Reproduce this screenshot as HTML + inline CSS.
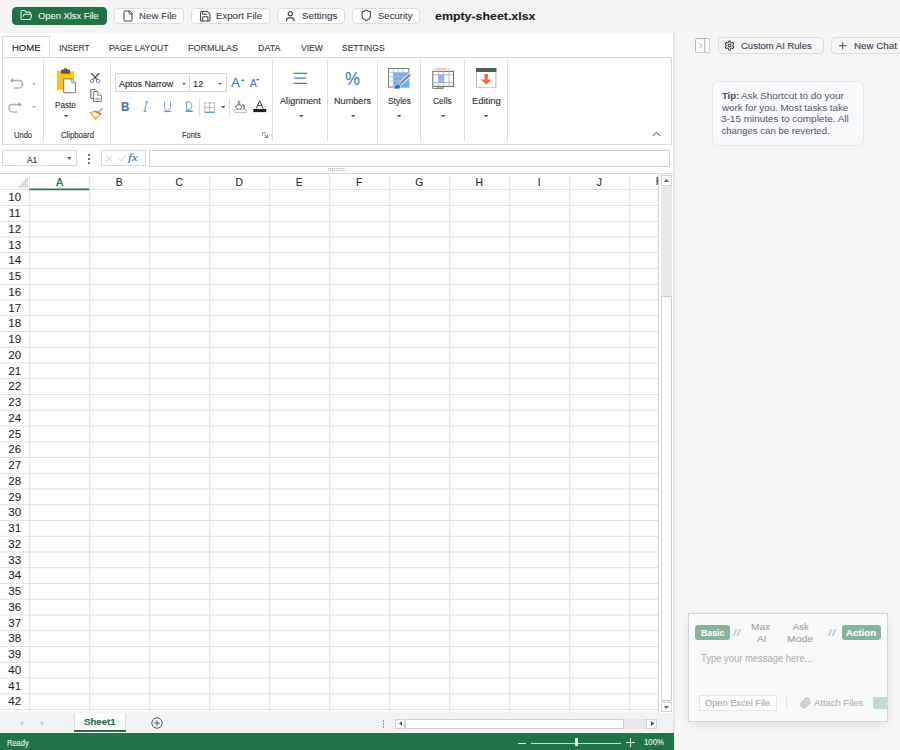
<!DOCTYPE html>
<html><head><meta charset="utf-8">
<style>
*{box-sizing:border-box;margin:0;padding:0}
html,body{width:900px;height:750px;overflow:hidden;background:#f4f4f4;font-family:"Liberation Sans",sans-serif}
.a{position:absolute}
.t{position:absolute;white-space:pre;transform-origin:0 0;-webkit-text-stroke:0.12px currentColor}
</style></head><body>
<div class="a" style="left:0px;top:0px;width:900px;height:32.6px;background:#f4f4f4"></div>
<div class="a" style="left:12px;top:7px;width:94.8px;height:17.5px;background:#217346;border:1px solid #217346;border-radius:4px"></div>
<div class="a" style="left:113.6px;top:7.6px;width:70.4px;height:16.6px;background:#fff;border:1px solid #dedede;border-radius:4px"></div>
<div class="a" style="left:191px;top:7.6px;width:79.30000000000001px;height:16.6px;background:#fff;border:1px solid #dedede;border-radius:4px"></div>
<div class="a" style="left:276.7px;top:7.6px;width:68.60000000000002px;height:16.6px;background:#fff;border:1px solid #dedede;border-radius:4px"></div>
<div class="a" style="left:352.3px;top:7.6px;width:68.0px;height:16.6px;background:#fff;border:1px solid #dedede;border-radius:4px"></div>
<svg class="a" style="left:20.2px;top:9.4px" width="12.6" height="12.6" viewBox="0 0 24 24" fill="none" stroke-linecap="round" stroke-linejoin="round" stroke="#dff5e6" stroke-width="2"><path d="m6 14 1.5-2.9A2 2 0 0 1 9.24 10H20a2 2 0 0 1 1.94 2.5l-1.54 6a2 2 0 0 1-1.95 1.5H4a2 2 0 0 1-2-2V5a2 2 0 0 1 2-2h3.9a2 2 0 0 1 1.69.9l.81 1.2a2 2 0 0 0 1.67.9H18a2 2 0 0 1 2 2v2"/></svg>
<svg class="a" style="left:121.6px;top:10.1px" width="12" height="12" viewBox="0 0 24 24" fill="none" stroke-linecap="round" stroke-linejoin="round" stroke="#3b4250" stroke-width="2"><path d="M15 2H6a2 2 0 0 0-2 2v16a2 2 0 0 0 2 2h12a2 2 0 0 0 2-2V7Z"/><path d="M14 2v4a2 2 0 0 0 2 2h4"/></svg>
<svg class="a" style="left:199px;top:9.6px" width="12.6" height="12.6" viewBox="0 0 24 24" fill="none" stroke-linecap="round" stroke-linejoin="round" stroke="#3b4250" stroke-width="2"><path d="M15.2 3a2 2 0 0 1 1.4.6l3.8 3.8a2 2 0 0 1 .6 1.4V19a2 2 0 0 1-2 2H5a2 2 0 0 1-2-2V5a2 2 0 0 1 2-2z"/><path d="M17 21v-7a1 1 0 0 0-1-1H8a1 1 0 0 0-1 1v7"/><path d="M7 3v4a1 1 0 0 0 1 1h7"/></svg>
<svg class="a" style="left:284.3px;top:9.7px" width="12.6" height="12.6" viewBox="0 0 24 24" fill="none" stroke-linecap="round" stroke-linejoin="round" stroke="#3b4250" stroke-width="2"><path d="M19 21v-2a4 4 0 0 0-4-4H9a4 4 0 0 0-4 4v2"/><circle cx="12" cy="7" r="4"/></svg>
<svg class="a" style="left:359.6px;top:9.3px" width="12.6" height="12.6" viewBox="0 0 24 24" fill="none" stroke-linecap="round" stroke-linejoin="round" stroke="#3b4250" stroke-width="2"><path d="M20 13c0 5-3.5 7.5-7.66 8.95a1 1 0 0 1-.67-.01C7.5 20.5 4 18 4 13V6a1 1 0 0 1 1-1c2 0 4.5-1.2 6.24-2.72a1.17 1.17 0 0 1 1.52 0C14.51 3.81 17 5 19 5a1 1 0 0 1 1 1z"/></svg>
<div class="t" style="left:38.21px;top:11.00px;font-size:9.6px;line-height:9.6px;color:#eaf7ee;font-weight:400;transform:scaleX(0.9740);">Open Xlsx File</div>
<div class="t" style="left:138.64px;top:11.00px;font-size:9.6px;line-height:9.6px;color:#3b4250;font-weight:400;transform:scaleX(1.0097);">New File</div>
<div class="t" style="left:216.15px;top:11.00px;font-size:9.6px;line-height:9.6px;color:#3b4250;font-weight:400;transform:scaleX(1.0056);">Export File</div>
<div class="t" style="left:302.19px;top:11.00px;font-size:9.6px;line-height:9.6px;color:#3b4250;font-weight:400;transform:scaleX(1.0176);">Settings</div>
<div class="t" style="left:377.80px;top:11.00px;font-size:9.6px;line-height:9.6px;color:#3b4250;font-weight:400;transform:scaleX(0.9927);">Security</div>
<div class="t" style="left:434.57px;top:10.00px;font-size:11.6px;line-height:11.6px;color:#1b1b1b;font-weight:700;transform:scaleX(1.0674);">empty-sheet.xlsx</div>
<div class="a" style="left:0px;top:32.6px;width:673.3px;height:112.4px;background:#fff"></div>
<div class="a" style="left:2.4px;top:56.6px;width:669.4px;height:88.2px;border:1px solid #dadada"></div>
<div class="a" style="left:2.4px;top:35.6px;width:47.6px;height:21.6px;border:1px solid #d6d6d6;border-bottom:none;background:#fff"></div>
<div class="t" style="left:11.58px;top:43.00px;font-size:9.9px;line-height:9.9px;color:#222;font-weight:400;transform:scaleX(0.9614);">HOME</div>
<div class="t" style="left:58.85px;top:43.00px;font-size:9.9px;line-height:9.9px;color:#3a3a3a;font-weight:400;transform:scaleX(0.8460);">INSERT</div>
<div class="t" style="left:109.35px;top:43.00px;font-size:9.9px;line-height:9.9px;color:#3a3a3a;font-weight:400;transform:scaleX(0.8729);">PAGE LAYOUT</div>
<div class="t" style="left:188.42px;top:43.00px;font-size:9.9px;line-height:9.9px;color:#3a3a3a;font-weight:400;transform:scaleX(0.9098);">FORMULAS</div>
<div class="t" style="left:257.72px;top:43.00px;font-size:9.9px;line-height:9.9px;color:#3a3a3a;font-weight:400;transform:scaleX(0.9072);">DATA</div>
<div class="t" style="left:300.60px;top:43.00px;font-size:9.9px;line-height:9.9px;color:#3a3a3a;font-weight:400;transform:scaleX(0.8634);">VIEW</div>
<div class="t" style="left:342.17px;top:43.00px;font-size:9.9px;line-height:9.9px;color:#3a3a3a;font-weight:400;transform:scaleX(0.8619);">SETTINGS</div>
<div class="a" style="left:42.5px;top:59.7px;width:1px;height:82px;background:#dedede"></div>
<div class="a" style="left:109.9px;top:59.7px;width:1px;height:82px;background:#dedede"></div>
<div class="a" style="left:271.9px;top:59.7px;width:1px;height:82px;background:#dedede"></div>
<div class="a" style="left:327.0px;top:59.7px;width:1px;height:82px;background:#dedede"></div>
<div class="a" style="left:376.9px;top:59.7px;width:1px;height:82px;background:#dedede"></div>
<div class="a" style="left:419.8px;top:59.7px;width:1px;height:82px;background:#dedede"></div>
<div class="a" style="left:463.7px;top:59.7px;width:1px;height:82px;background:#dedede"></div>
<div class="a" style="left:507.0px;top:59.7px;width:1px;height:82px;background:#dedede"></div>
<div class="t" style="left:14.24px;top:131.00px;font-size:8.3px;line-height:8.3px;color:#333;font-weight:400;transform:scaleX(0.9105);">Undo</div>
<div class="t" style="left:60.64px;top:131.00px;font-size:8.3px;line-height:8.3px;color:#333;font-weight:400;transform:scaleX(0.9275);">Clipboard</div>
<div class="t" style="left:182.43px;top:131.00px;font-size:8.3px;line-height:8.3px;color:#333;font-weight:400;transform:scaleX(0.8962);">Fonts</div>
<div class="t" style="left:54.50px;top:101.00px;font-size:8.8px;line-height:8.8px;color:#333;font-weight:400;transform:scaleX(0.9302);">Paste</div>
<div class="t" style="left:279.80px;top:97.00px;font-size:8.9px;line-height:8.9px;color:#333;font-weight:400;transform:scaleX(1.0329);">Alignment</div>
<div class="t" style="left:334.23px;top:97.00px;font-size:8.9px;line-height:8.9px;color:#333;font-weight:400;transform:scaleX(1.0286);">Numbers</div>
<div class="t" style="left:387.53px;top:97.00px;font-size:8.9px;line-height:8.9px;color:#333;font-weight:400;transform:scaleX(0.9489);">Styles</div>
<div class="t" style="left:433.22px;top:97.00px;font-size:8.9px;line-height:8.9px;color:#333;font-weight:400;transform:scaleX(0.9526);">Cells</div>
<div class="t" style="left:472.00px;top:97.00px;font-size:8.9px;line-height:8.9px;color:#333;font-weight:400;transform:scaleX(1.0602);">Editing</div>
<svg class="a" style="left:63.7px;top:115.0px" width="4.4" height="2.4"><path d="M0 0L4.4 0L2.2 2.4Z" fill="#555"/></svg>
<svg class="a" style="left:298.6px;top:115.0px" width="4.4" height="2.4"><path d="M0 0L4.4 0L2.2 2.4Z" fill="#555"/></svg>
<svg class="a" style="left:350.6px;top:115.0px" width="4.4" height="2.4"><path d="M0 0L4.4 0L2.2 2.4Z" fill="#555"/></svg>
<svg class="a" style="left:397.2px;top:115.0px" width="4.4" height="2.4"><path d="M0 0L4.4 0L2.2 2.4Z" fill="#555"/></svg>
<svg class="a" style="left:440.6px;top:115.0px" width="4.4" height="2.4"><path d="M0 0L4.4 0L2.2 2.4Z" fill="#555"/></svg>
<svg class="a" style="left:484.2px;top:115.0px" width="4.4" height="2.4"><path d="M0 0L4.4 0L2.2 2.4Z" fill="#555"/></svg>
<svg class="a" style="left:8px;top:76px" width="16" height="14" viewBox="0 0 16 14" ><path d="M4.6 4.5 H11 A3.7 3.7 0 0 1 11 11.9 H6.2" fill="none" stroke="#b0b0b0" stroke-width="1.5"/><path d="M1.8 4.5 L5.2 1.9 L5.2 7.1 Z" fill="#aaa"/></svg>
<svg class="a" style="left:8px;top:99.8px" width="16" height="14" viewBox="0 0 16 14" ><path d="M11.1 4.5 H4.7 A3.7 3.7 0 0 0 4.7 11.9 H9.5" fill="none" stroke="#b0b0b0" stroke-width="1.5"/><path d="M13.9 4.5 L10.5 1.9 L10.5 7.1 Z" fill="#aaa"/></svg>
<svg class="a" style="left:31.5px;top:82.80000000000001px" width="4" height="2.2"><path d="M0 0L4 0L2.0 2.2Z" fill="#b0b0b0"/></svg>
<svg class="a" style="left:31.5px;top:105.5px" width="4" height="2.2"><path d="M0 0L4 0L2.0 2.2Z" fill="#b0b0b0"/></svg>
<svg class="a" style="left:56px;top:68px" width="22" height="27" viewBox="0 0 22 27" ><rect x="1" y="3.2" width="17" height="19.2" fill="#fcc419"/><rect x="5" y="1.4" width="9" height="4.4" rx="1" fill="#555"/><rect x="8" y="0.4" width="3" height="2" fill="#555"/><path d="M7.7 10.9 H15.7 L19.6 14.8 V24.7 H7.7 Z" fill="#fff" stroke="#777" stroke-width="1"/><path d="M15.7 10.9 V14.8 H19.6" fill="#ddd" stroke="#888" stroke-width="0.8"/></svg>
<svg class="a" style="left:89px;top:72px" width="14" height="13" viewBox="0 0 14 13" ><path d="M2.2 1.2 L8.1 7.4 M10.2 1.2 L4.3 7.4" stroke="#4a4a4a" stroke-width="1.25" fill="none"/><circle cx="3.1" cy="9.1" r="1.8" fill="none" stroke="#4a7fc0" stroke-width="0.95"/><circle cx="9.2" cy="9.1" r="1.8" fill="none" stroke="#4a7fc0" stroke-width="0.95"/></svg>
<svg class="a" style="left:89.5px;top:89px" width="13" height="13.5" viewBox="0 0 13 13.5" ><path d="M0.8 0.6 H5 L7 2.6 V9.6 H0.8 Z" fill="#fff" stroke="#555" stroke-width="0.9"/><path d="M3.6 2.6 H7.6 L11.3 6.4 V12.4 H3.6 Z" fill="#fff" stroke="#666" stroke-width="0.9"/><path d="M7.6 2.6 V6.4 H11.3" fill="#e8e8e8" stroke="#888" stroke-width="0.7"/><path d="M5.2 9.3 H9.6 M5.2 10.7 H9.6" stroke="#6a8fb8" stroke-width="0.7"/></svg>
<svg class="a" style="left:89px;top:106px" width="15" height="15" viewBox="0 0 15 15" ><path d="M1.3 6.6 L6.1 5.2 L11.9 8.1 L6.6 13.4 Z" fill="#fff3dc" stroke="#f0a030" stroke-width="1.1" stroke-linejoin="round"/><path d="M4 10.5 L6.6 13.4 L9 11 Z" fill="#f5b840"/><path d="M6.1 5.2 L11.9 8.1" stroke="#8a8a8a" stroke-width="1.8"/><path d="M9 6.6 L13.8 2.3" stroke="#999" stroke-width="2.2" stroke-dasharray="1 0.6"/></svg>
<div class="a" style="left:115.1px;top:73.3px;width:111.8px;height:19.1px;border:1px solid #d9d9d9"></div>
<div class="a" style="left:189.4px;top:73.3px;width:1px;height:19.1px;background:#d9d9d9"></div>
<div class="t" style="left:118.90px;top:80.00px;font-size:8.9px;line-height:8.9px;color:#2b2b2b;font-weight:400;transform:scaleX(1.0102);">Aptos Narrow</div>
<div class="t" style="left:193.02px;top:80.00px;font-size:8.9px;line-height:8.9px;color:#2b2b2b;font-weight:400;transform:scaleX(1.0400);">12</div>
<svg class="a" style="left:181.8px;top:82.7px" width="4" height="2"><path d="M0 0L4 0L2.0 2Z" fill="#666"/></svg>
<svg class="a" style="left:218.3px;top:82.7px" width="4" height="2"><path d="M0 0L4 0L2.0 2Z" fill="#666"/></svg>
<div class="t" style="left:231.30px;top:77.00px;font-size:12.2px;line-height:12.2px;color:#3c7bc0;font-weight:400;transform:scaleX(1.0875);">A</div>
<svg class="a" style="left:241.2px;top:78.5px" width="3.6" height="2"><path d="M0 2L1.8 0L3.6 2Z" fill="#3c7bc0"/></svg>
<div class="t" style="left:250.00px;top:79.00px;font-size:10.3px;line-height:10.3px;color:#3c7bc0;font-weight:400;transform:scaleX(0.9926);">A</div>
<svg class="a" style="left:255.5px;top:79.25px" width="3.4" height="1.9"><path d="M0 0L3.4 0L1.7 1.9Z" fill="#3c7bc0"/></svg>
<div class="t" style="left:121.31px;top:101.00px;font-size:12.6px;line-height:12.6px;color:#3b78bd;font-weight:700;transform:scaleX(0.9161);">B</div>
<svg class="a" style="left:143px;top:100.5px" width="7" height="11" viewBox="0 0 7 11" ><path d="M3.6 0.8 L1.6 10.3 M2.4 0.8 H5.6 M0.6 10.3 H3.6" stroke="#4a86c5" stroke-width="0.9" fill="none"/></svg>
<svg class="a" style="left:163px;top:100.5px" width="9" height="12" viewBox="0 0 9 12" ><path d="M1.5 0.8 V6.5 A3 3 0 0 0 7.5 6.5 V0.8" stroke="#6a9bd0" stroke-width="0.9" fill="none"/><path d="M0.8 10.6 H8.2" stroke="#4a86c5" stroke-width="0.9"/></svg>
<svg class="a" style="left:184.5px;top:100.5px" width="9" height="12" viewBox="0 0 9 12" ><path d="M1.5 0.8 H3.8 A4 4 0 0 1 3.8 8.6 H1.5 Z" stroke="#6a9bd0" stroke-width="0.9" fill="none"/><rect x="0.6" y="9.2" width="7" height="1.8" fill="#5e9be0"/></svg>
<div class="a" style="left:198.7px;top:97.6px;width:1px;height:19px;background:#dedede"></div>
<div class="a" style="left:229.1px;top:97.6px;width:1px;height:19px;background:#dedede"></div>
<svg class="a" style="left:204px;top:101.5px" width="12" height="11" viewBox="0 0 12 11" ><path d="M0.8 0.8 H10.5 V10 M0.8 0.8 V10 M5.6 0.8 V10 M0.8 5.4 H10.5" stroke="#8f8f8f" stroke-width="0.8" stroke-dasharray="1.6 0.7" fill="none"/><path d="M0.5 10.2 H10.8" stroke="#3c7bc0" stroke-width="1.1"/></svg>
<svg class="a" style="left:221.10000000000002px;top:106.3px" width="4.4" height="2.4"><path d="M0 0L4.4 0L2.2 2.4Z" fill="#555"/></svg>
<svg class="a" style="left:233.5px;top:99.6px" width="13" height="13.5" viewBox="0 0 13 13.5" ><path d="M1.4 7 L4.6 3.6 L8.2 6.6 L5 10 Z" fill="#fff" stroke="#444" stroke-width="0.9" stroke-linejoin="round"/><circle cx="4.9" cy="2" r="1.1" fill="none" stroke="#777" stroke-width="0.8"/><path d="M4.9 3.1 V6.2" stroke="#666" stroke-width="0.7"/><path d="M8.4 5 Q10.6 4.6 10 9.2" stroke="#3c7bc0" stroke-width="1.4" fill="none"/><rect x="0.9" y="9.7" width="11.4" height="3" fill="#fff" stroke="#aaa" stroke-width="0.8"/></svg>
<svg class="a" style="left:253px;top:100.2px" width="13.5" height="12.5" viewBox="0 0 13.5 12.5" ><path d="M3.2 8.6 L6.7 0.6 L10.2 8.6 M4.6 5.6 H8.8" stroke="#444" stroke-width="1" fill="none"/><rect x="0.3" y="9" width="12.9" height="3.1" fill="#222"/></svg>
<svg class="a" style="left:261.5px;top:131.8px" width="6" height="6" viewBox="0 0 6 6" ><path d="M0.5 0.5 H4 M0.5 0.5 V4" stroke="#888" stroke-width="0.8" fill="none"/><path d="M2 2 L5.5 5.5 M5.5 2.8 V5.5 H2.8" stroke="#777" stroke-width="0.9" fill="none"/></svg>
<svg class="a" style="left:293px;top:72px" width="15" height="13" viewBox="0 0 15 13" ><path d="M0.6 1.4 H14 M1.2 6.2 H13.4 M0.6 11.4 H14" stroke="#3d7cc0" stroke-width="1.3" fill="none"/></svg>
<div class="t" style="left:345.02px;top:71.00px;font-size:17.5px;line-height:17.5px;color:#3d7cc0;font-weight:400;transform:scaleX(0.9586);">%</div>
<svg class="a" style="left:388px;top:67.6px" width="23.5" height="22" viewBox="0 0 23.5 22" ><rect x="0.5" y="0.5" width="20.3" height="18.5" fill="#fff" stroke="#7a7a7a" stroke-width="1"/><rect x="5.3" y="4.4" width="15.5" height="14.6" fill="#72aef0"/><path d="M0.5 4.4 H20.8 M0.5 8.6 H20.8 M0.5 12.9 H20.8 M5.3 0.5 V19 M10.1 0.5 V19 M14.9 0.5 V19" stroke="#a9bfd6" stroke-width="0.8"/><path d="M22.1 6.7 L12.6 15.4" stroke="#fff" stroke-width="4"/><path d="M22.1 6.7 L12.6 15.4" stroke="#8a8a8a" stroke-width="2.4"/><path d="M5.3 20.6 Q6.2 16.4 10.2 15.6 Q13.6 17.4 12.4 20.6 Q8.8 21.6 5.3 20.6Z" fill="#2f74c8" stroke="#fff" stroke-width="0.7"/></svg>
<svg class="a" style="left:431.5px;top:67px" width="23" height="22.5" viewBox="0 0 23 22.5" ><path d="M0.8 1.9 H1.8 M3.5 1.9 H14.5 M16.5 1.9 H17.3" stroke="#f0a890" stroke-width="1.3"/><rect x="0.8" y="4.3" width="20.7" height="15.1" fill="#fff" stroke="#666" stroke-width="1"/><rect x="6.6" y="7.8" width="5.2" height="7.7" fill="#7fbfff"/><path d="M0.8 7.8 H21.5 M0.8 15.5 H21.5 M6.6 4.3 V19.4 M11.8 4.3 V19.4 M17 4.3 V19.4" stroke="#aaa" stroke-width="0.8"/><path d="M0.8 19.4 V21.4 H5.1 Q5.5 19.9 6.6 19.9 H11.2 V21.4 H5.1" fill="#fff" stroke="#666" stroke-width="0.9"/></svg>
<svg class="a" style="left:476px;top:67.5px" width="20.5" height="20.5" viewBox="0 0 20.5 20.5" ><rect x="0.5" y="0.5" width="19.4" height="19.3" rx="0.8" fill="#fff" stroke="#b8b8b8" stroke-width="1"/><rect x="0" y="0" width="20.4" height="4" fill="#5a5a5a"/><rect x="8.5" y="6" width="3.4" height="5.8" fill="#f0703a"/><path d="M5 11.4 L15.4 11.4 L10.2 16.8 Z" fill="#f0703a"/></svg>
<svg class="a" style="left:652px;top:131px" width="9" height="6" viewBox="0 0 9 6" ><path d="M0.8 5 L4.5 1.2 L8.2 5" stroke="#444" stroke-width="1" fill="none"/></svg>
<div class="a" style="left:0px;top:145px;width:673.3px;height:28.3px;background:#fff"></div>
<div class="a" style="left:0px;top:172.6px;width:673.3px;height:1px;background:#d8d8d8"></div>
<div class="a" style="left:2.4px;top:149.7px;width:74.3px;height:16.6px;border:1px solid #d9d9d9"></div>
<div class="t" style="left:26.70px;top:156.00px;font-size:8.6px;line-height:8.6px;color:#333;font-weight:400;transform:scaleX(0.9756);">A1</div>
<svg class="a" style="left:67.3px;top:157.2px" width="4.4" height="2.8"><path d="M0 0L4.4 0L2.2 2.8Z" fill="#555"/></svg>
<div class="a" style="left:88.3px;top:154.2px;width:1.6px;height:1.6px;border-radius:1px;background:#444"></div>
<div class="a" style="left:88.3px;top:158.2px;width:1.6px;height:1.6px;border-radius:1px;background:#444"></div>
<div class="a" style="left:88.3px;top:162.2px;width:1.6px;height:1.6px;border-radius:1px;background:#444"></div>
<div class="a" style="left:101.3px;top:149.7px;width:44.5px;height:16.6px;border:1px solid #d9d9d9"></div>
<svg class="a" style="left:106px;top:154.5px" width="8" height="7" viewBox="0 0 8 7" ><path d="M0.8 0.8 L6.4 6.2 M6.4 0.8 L0.8 6.2" stroke="#c8c8c8" stroke-width="0.9" fill="none"/></svg>
<svg class="a" style="left:116.8px;top:155px" width="10" height="7" viewBox="0 0 10 7" ><path d="M0.6 3 L3.4 5.8 L8.8 0.6" stroke="#c8c8c8" stroke-width="0.9" fill="none"/></svg>
<div class="t" style="left:128.40px;top:153.00px;font-size:10.2px;line-height:10.2px;color:#3c7bc0;font-weight:400;transform:scaleX(1.3290);font-style:italic;font-family:'Liberation Serif'">fx</div>
<div class="a" style="left:149.4px;top:149.7px;width:520.8px;height:17.6px;border:1px solid #d3d3d3"></div>
<svg class="a" style="left:328.3px;top:167.8px" width="18" height="1.4"><path d="M0 0.7 H17.6" stroke="#8a8a8a" stroke-width="0.9" stroke-dasharray="1 0.9"/></svg>
<svg class="a" style="left:328.3px;top:169.8px" width="18" height="1.4"><path d="M0 0.7 H17.6" stroke="#8a8a8a" stroke-width="0.9" stroke-dasharray="1 0.9"/></svg>
<div class="a" style="left:0px;top:173.6px;width:658.4px;height:539.7px;background:#fff"></div>
<svg class="a" style="left:0;top:0" width="900" height="750"><path d="M29.30 174.7V713.3 M89.30 174.7V713.3 M149.30 174.7V713.3 M209.30 174.7V713.3 M269.30 174.7V713.3 M329.30 174.7V713.3 M389.30 174.7V713.3 M449.30 174.7V713.3 M509.30 174.7V713.3 M569.30 174.7V713.3 M629.30 174.7V713.3" stroke="#dfdfdf" stroke-width="1" fill="none"/><path d="M0 205.50H658.4 M0 221.25H658.4 M0 237.00H658.4 M0 252.75H658.4 M0 268.50H658.4 M0 284.25H658.4 M0 300.00H658.4 M0 315.75H658.4 M0 331.50H658.4 M0 347.25H658.4 M0 363.00H658.4 M0 378.75H658.4 M0 394.50H658.4 M0 410.25H658.4 M0 426.00H658.4 M0 441.75H658.4 M0 457.50H658.4 M0 473.25H658.4 M0 489.00H658.4 M0 504.75H658.4 M0 520.50H658.4 M0 536.25H658.4 M0 552.00H658.4 M0 567.75H658.4 M0 583.50H658.4 M0 599.25H658.4 M0 615.00H658.4 M0 630.75H658.4 M0 646.50H658.4 M0 662.25H658.4 M0 678.00H658.4 M0 693.75H658.4 M0 709.50H658.4" stroke="#e1e1e1" stroke-width="1" fill="none"/><path d="M658.4 174.7V713.3" stroke="#cfcfcf" stroke-width="1"/><path d="M0 713.3H658.4" stroke="#d3d3d3" stroke-width="1"/><path d="M17.3 187.7 L28 187.7 L28 176.7 Z" fill="#dcdcdc"/><path d="M0 189.6H658.4" stroke="#e1e1e1" stroke-width="1"/><path d="M29.3 189.4 H89.3" stroke="#2a7a4d" stroke-width="1.7"/></svg>
<div class="t" style="left:56.00px;top:178.00px;font-size:10.4px;line-height:10.4px;color:#2a7a4d;font-weight:400;transform:scaleX(1.0429);-webkit-text-stroke:0.35px #2a7a4d">A</div>
<div class="t" style="left:89.3px;top:178.7px;width:60px;text-align:center;font-size:10.4px;line-height:8px;color:#222;-webkit-text-stroke:0.04px #222">B</div>
<div class="t" style="left:149.3px;top:178.7px;width:60px;text-align:center;font-size:10.4px;line-height:8px;color:#222;-webkit-text-stroke:0.04px #222">C</div>
<div class="t" style="left:209.3px;top:178.7px;width:60px;text-align:center;font-size:10.4px;line-height:8px;color:#222;-webkit-text-stroke:0.04px #222">D</div>
<div class="t" style="left:269.3px;top:178.7px;width:60px;text-align:center;font-size:10.4px;line-height:8px;color:#222;-webkit-text-stroke:0.04px #222">E</div>
<div class="t" style="left:329.3px;top:178.7px;width:60px;text-align:center;font-size:10.4px;line-height:8px;color:#222;-webkit-text-stroke:0.04px #222">F</div>
<div class="t" style="left:389.3px;top:178.7px;width:60px;text-align:center;font-size:10.4px;line-height:8px;color:#222;-webkit-text-stroke:0.04px #222">G</div>
<div class="t" style="left:449.3px;top:178.7px;width:60px;text-align:center;font-size:10.4px;line-height:8px;color:#222;-webkit-text-stroke:0.04px #222">H</div>
<div class="t" style="left:509.29999999999995px;top:178.7px;width:60px;text-align:center;font-size:10.4px;line-height:8px;color:#222;-webkit-text-stroke:0.04px #222">I</div>
<div class="t" style="left:569.3px;top:178.7px;width:60px;text-align:center;font-size:10.4px;line-height:8px;color:#222;-webkit-text-stroke:0.04px #222">J</div>
<div class="a" style="left:629.3px;top:175px;width:29.1px;height:14px;overflow:hidden"><div class="t" style="left:0;top:3.4px;width:60px;text-align:center;font-size:10.4px;line-height:8px;color:#222;-webkit-text-stroke:0.04px #222">K</div></div>
<div class="t" style="left:0;top:193.30px;width:29.3px;text-align:center;font-size:11.6px;line-height:8px;color:#222;-webkit-text-stroke:0.04px #222">10</div>
<div class="t" style="left:0;top:209.05px;width:29.3px;text-align:center;font-size:11.6px;line-height:8px;color:#222;-webkit-text-stroke:0.04px #222">11</div>
<div class="t" style="left:0;top:224.80px;width:29.3px;text-align:center;font-size:11.6px;line-height:8px;color:#222;-webkit-text-stroke:0.04px #222">12</div>
<div class="t" style="left:0;top:240.55px;width:29.3px;text-align:center;font-size:11.6px;line-height:8px;color:#222;-webkit-text-stroke:0.04px #222">13</div>
<div class="t" style="left:0;top:256.30px;width:29.3px;text-align:center;font-size:11.6px;line-height:8px;color:#222;-webkit-text-stroke:0.04px #222">14</div>
<div class="t" style="left:0;top:272.05px;width:29.3px;text-align:center;font-size:11.6px;line-height:8px;color:#222;-webkit-text-stroke:0.04px #222">15</div>
<div class="t" style="left:0;top:287.80px;width:29.3px;text-align:center;font-size:11.6px;line-height:8px;color:#222;-webkit-text-stroke:0.04px #222">16</div>
<div class="t" style="left:0;top:303.55px;width:29.3px;text-align:center;font-size:11.6px;line-height:8px;color:#222;-webkit-text-stroke:0.04px #222">17</div>
<div class="t" style="left:0;top:319.30px;width:29.3px;text-align:center;font-size:11.6px;line-height:8px;color:#222;-webkit-text-stroke:0.04px #222">18</div>
<div class="t" style="left:0;top:335.05px;width:29.3px;text-align:center;font-size:11.6px;line-height:8px;color:#222;-webkit-text-stroke:0.04px #222">19</div>
<div class="t" style="left:0;top:350.80px;width:29.3px;text-align:center;font-size:11.6px;line-height:8px;color:#222;-webkit-text-stroke:0.04px #222">20</div>
<div class="t" style="left:0;top:366.55px;width:29.3px;text-align:center;font-size:11.6px;line-height:8px;color:#222;-webkit-text-stroke:0.04px #222">21</div>
<div class="t" style="left:0;top:382.30px;width:29.3px;text-align:center;font-size:11.6px;line-height:8px;color:#222;-webkit-text-stroke:0.04px #222">22</div>
<div class="t" style="left:0;top:398.05px;width:29.3px;text-align:center;font-size:11.6px;line-height:8px;color:#222;-webkit-text-stroke:0.04px #222">23</div>
<div class="t" style="left:0;top:413.80px;width:29.3px;text-align:center;font-size:11.6px;line-height:8px;color:#222;-webkit-text-stroke:0.04px #222">24</div>
<div class="t" style="left:0;top:429.55px;width:29.3px;text-align:center;font-size:11.6px;line-height:8px;color:#222;-webkit-text-stroke:0.04px #222">25</div>
<div class="t" style="left:0;top:445.30px;width:29.3px;text-align:center;font-size:11.6px;line-height:8px;color:#222;-webkit-text-stroke:0.04px #222">26</div>
<div class="t" style="left:0;top:461.05px;width:29.3px;text-align:center;font-size:11.6px;line-height:8px;color:#222;-webkit-text-stroke:0.04px #222">27</div>
<div class="t" style="left:0;top:476.80px;width:29.3px;text-align:center;font-size:11.6px;line-height:8px;color:#222;-webkit-text-stroke:0.04px #222">28</div>
<div class="t" style="left:0;top:492.55px;width:29.3px;text-align:center;font-size:11.6px;line-height:8px;color:#222;-webkit-text-stroke:0.04px #222">29</div>
<div class="t" style="left:0;top:508.30px;width:29.3px;text-align:center;font-size:11.6px;line-height:8px;color:#222;-webkit-text-stroke:0.04px #222">30</div>
<div class="t" style="left:0;top:524.05px;width:29.3px;text-align:center;font-size:11.6px;line-height:8px;color:#222;-webkit-text-stroke:0.04px #222">31</div>
<div class="t" style="left:0;top:539.80px;width:29.3px;text-align:center;font-size:11.6px;line-height:8px;color:#222;-webkit-text-stroke:0.04px #222">32</div>
<div class="t" style="left:0;top:555.55px;width:29.3px;text-align:center;font-size:11.6px;line-height:8px;color:#222;-webkit-text-stroke:0.04px #222">33</div>
<div class="t" style="left:0;top:571.30px;width:29.3px;text-align:center;font-size:11.6px;line-height:8px;color:#222;-webkit-text-stroke:0.04px #222">34</div>
<div class="t" style="left:0;top:587.05px;width:29.3px;text-align:center;font-size:11.6px;line-height:8px;color:#222;-webkit-text-stroke:0.04px #222">35</div>
<div class="t" style="left:0;top:602.80px;width:29.3px;text-align:center;font-size:11.6px;line-height:8px;color:#222;-webkit-text-stroke:0.04px #222">36</div>
<div class="t" style="left:0;top:618.55px;width:29.3px;text-align:center;font-size:11.6px;line-height:8px;color:#222;-webkit-text-stroke:0.04px #222">37</div>
<div class="t" style="left:0;top:634.30px;width:29.3px;text-align:center;font-size:11.6px;line-height:8px;color:#222;-webkit-text-stroke:0.04px #222">38</div>
<div class="t" style="left:0;top:650.05px;width:29.3px;text-align:center;font-size:11.6px;line-height:8px;color:#222;-webkit-text-stroke:0.04px #222">39</div>
<div class="t" style="left:0;top:665.80px;width:29.3px;text-align:center;font-size:11.6px;line-height:8px;color:#222;-webkit-text-stroke:0.04px #222">40</div>
<div class="t" style="left:0;top:681.55px;width:29.3px;text-align:center;font-size:11.6px;line-height:8px;color:#222;-webkit-text-stroke:0.04px #222">41</div>
<div class="t" style="left:0;top:697.30px;width:29.3px;text-align:center;font-size:11.6px;line-height:8px;color:#222;-webkit-text-stroke:0.04px #222">42</div>
<div class="a" style="left:658.9px;top:174.7px;width:14.4px;height:538.6px;background:#fff"></div>
<div class="a" style="left:661.2px;top:186px;width:10.6px;height:515.6px;background:#e9e9e9"></div>
<div class="a" style="left:661px;top:175.3px;width:10.8px;height:10.9px;background:#fff;border:1px solid #d6d6d6"></div>
<svg class="a" style="left:663.9px;top:179.3px" width="5" height="3"><path d="M0 3L2.5 0L5 3Z" fill="#666"/></svg>
<div class="a" style="left:661px;top:296.2px;width:10.8px;height:405px;background:#fff;border:1px solid #cfcfcf;border-radius:1px"></div>
<div class="a" style="left:661px;top:701.7px;width:10.8px;height:10.6px;background:#fff;border:1px solid #d6d6d6"></div>
<svg class="a" style="left:663.9px;top:705.5px" width="5" height="3"><path d="M0 0L5 0L2.5 3Z" fill="#666"/></svg>
<div class="a" style="left:673.1px;top:32px;width:1px;height:701px;background:#e3e3e3"></div>
<div class="a" style="left:0px;top:713.3px;width:673.3px;height:20.1px;background:#f3f3f3"></div>
<svg class="a" style="left:19.8px;top:721.2px" width="3.2" height="4.8"><path d="M3 0 L0 2.4 L3 4.8Z" fill="#c8c8c8"/></svg>
<svg class="a" style="left:41px;top:721.2px" width="3.2" height="4.8"><path d="M0 0 L3 2.4 L0 4.8Z" fill="#c8c8c8"/></svg>
<div class="a" style="left:74.4px;top:712.7px;width:51.2px;height:18.8px;background:#fff;border-left:1px solid #ddd;border-right:1px solid #ddd"></div>
<div class="a" style="left:74.4px;top:730.2px;width:51.2px;height:1.6px;background:#2e6b4b"></div>
<div class="t" style="left:83.75px;top:717.00px;font-size:9.8px;line-height:9.8px;color:#2e6b4b;font-weight:700;transform:scaleX(0.9858);">Sheet1</div>
<svg class="a" style="left:150.8px;top:717.4px" width="12" height="12" viewBox="0 0 12 12" ><circle cx="6" cy="6" r="5.2" fill="none" stroke="#555" stroke-width="1"/><path d="M6 3.2V8.8M3.2 6H8.8" stroke="#555" stroke-width="1"/></svg>
<div class="a" style="left:383px;top:720.4px;width:1.3px;height:1.3px;background:#999"></div>
<div class="a" style="left:383px;top:723.4px;width:1.3px;height:1.3px;background:#999"></div>
<div class="a" style="left:383px;top:726.4px;width:1.3px;height:1.3px;background:#999"></div>
<div class="a" style="left:395.3px;top:718.5px;width:10px;height:10.3px;background:#fff;border:1px solid #d3d3d3"></div>
<svg class="a" style="left:398.5px;top:721.3px" width="3.6" height="5"><path d="M3.4 0 L0 2.5 L3.4 5Z" fill="#555"/></svg>
<div class="a" style="left:405.3px;top:718.5px;width:241.2px;height:10.4px;background:#e9e9e9"></div>
<div class="a" style="left:405.3px;top:718.5px;width:219.2px;height:10.4px;background:#fff;border:1px solid #cfcfcf;border-radius:1px"></div>
<div class="a" style="left:646.4px;top:718.5px;width:10.8px;height:10.4px;background:#fff;border:1px solid #d3d3d3"></div>
<svg class="a" style="left:650.5px;top:721.2px" width="3.6" height="5"><path d="M0 0 L3.4 2.5 L0 5Z" fill="#555"/></svg>
<div class="a" style="left:0px;top:733.4px;width:673.6px;height:16.6px;background:#217346"></div>
<div class="t" style="left:7.14px;top:739.00px;font-size:8.6px;line-height:8.6px;color:#e6f1ea;font-weight:400;transform:scaleX(0.8750);">Ready</div>
<div class="a" style="left:518px;top:742.5px;width:8.4px;height:1px;background:#e6f1ea"></div>
<div class="a" style="left:531px;top:742.5px;width:90px;height:1px;background:#c4dccc"></div>
<div class="a" style="left:575px;top:738.4px;width:2.6px;height:7.6px;background:#eef6f0"></div>
<div class="a" style="left:626px;top:742px;width:9px;height:1.2px;background:#e6f1ea"></div>
<div class="a" style="left:629.9px;top:738.4px;width:1.2px;height:8.2px;background:#e6f1ea"></div>
<div class="t" style="left:643.71px;top:738.00px;font-size:8.5px;line-height:8.5px;color:#e6f1ea;font-weight:400;transform:scaleX(0.9253);">100%</div>
<div class="a" style="left:673.6px;top:32.3px;width:226.4px;height:718px;background:#f5f5f5"></div>
<div class="a" style="left:673.6px;top:32px;width:1px;height:718px;background:#e6e6e6"></div>
<svg class="a" style="left:694.6px;top:37.8px" width="15.6" height="15.6" viewBox="0 0 15.6 15.6" ><rect x="0.5" y="0.5" width="14.5" height="14.4" rx="1.8" fill="#fbfbfb" stroke="#b5b5b5" stroke-width="1"/><path d="M9.8 0.5V14.9" stroke="#b0b0b0" stroke-width="1"/><path d="M4.6 5.3 L6.8 7.7 L4.6 10.1" stroke="#a0a0a0" stroke-width="0.9" fill="none"/></svg>
<div class="a" style="left:717.7px;top:37.3px;width:105.9px;height:17.1px;background:#f6f6f6;border:1px solid #dcdcdc;border-radius:4px"></div>
<svg class="a" style="left:723.8px;top:40.2px" width="11" height="11" viewBox="0 0 24 24" fill="none" stroke-linecap="round" stroke-linejoin="round" stroke="#3b4250" stroke-width="2.2"><path d="M12.22 2h-.44a2 2 0 0 0-2 2v.18a2 2 0 0 1-1 1.73l-.43.25a2 2 0 0 1-2 0l-.15-.08a2 2 0 0 0-2.73.73l-.22.38a2 2 0 0 0 .73 2.73l.15.1a2 2 0 0 1 1 1.72v.51a2 2 0 0 1-1 1.74l-.15.09a2 2 0 0 0-.73 2.73l.22.38a2 2 0 0 0 2.73.73l.15-.08a2 2 0 0 1 2 0l.43.25a2 2 0 0 1 1 1.73V20a2 2 0 0 0 2 2h.44a2 2 0 0 0 2-2v-.18a2 2 0 0 1 1-1.73l.43-.25a2 2 0 0 1 2 0l.15.08a2 2 0 0 0 2.73-.73l.22-.39a2 2 0 0 0-.73-2.73l-.15-.08a2 2 0 0 1-1-1.74v-.5a2 2 0 0 1 1-1.74l.15-.09a2 2 0 0 0 .73-2.73l-.22-.38a2 2 0 0 0-2.73-.73l-.15.08a2 2 0 0 1-2 0l-.43-.25a2 2 0 0 1-1-1.73V4a2 2 0 0 0-2-2z"/><circle cx="12" cy="12" r="3"/></svg>
<div class="t" style="left:740.51px;top:41.00px;font-size:9.6px;line-height:9.6px;color:#3b4250;font-weight:400;transform:scaleX(0.9894);">Custom AI Rules</div>
<div class="a" style="left:830.5px;top:37.3px;width:80px;height:17.1px;background:#f6f6f6;border:1px solid #dcdcdc;border-radius:4px"></div>
<svg class="a" style="left:837px;top:40.2px" width="11.4" height="11.4" viewBox="0 0 24 24" fill="none" stroke-linecap="round" stroke-linejoin="round" stroke="#3b4250" stroke-width="2"><path d="M5 12h14"/><path d="M12 5v14"/></svg>
<div class="t" style="left:854.04px;top:41.00px;font-size:9.6px;line-height:9.6px;color:#3b4250;font-weight:400;transform:scaleX(1.0182);">New Chat</div>
<div class="a" style="left:711.9px;top:80.7px;width:151.7px;height:65.7px;background:#f8f9fb;border:1px solid #e6e7ea;border-radius:7px"></div>
<div class="t" style="left:721.90px;top:91.00px;font-size:9.6px;line-height:9.6px;color:#4a515b;font-weight:700;">Tip:</div>
<div class="t" style="left:741.00px;top:91.00px;font-size:9.6px;line-height:9.6px;color:#4f5763;font-weight:400;transform:scaleX(1.0302);-webkit-text-stroke:0">Ask Shortcut to do your</div>
<div class="t" style="left:721.90px;top:103.00px;font-size:9.6px;line-height:9.6px;color:#4f5763;font-weight:400;transform:scaleX(1.0158);-webkit-text-stroke:0">work for you. Most tasks take</div>
<div class="t" style="left:721.38px;top:114.00px;font-size:9.6px;line-height:9.6px;color:#4f5763;font-weight:400;transform:scaleX(1.0369);-webkit-text-stroke:0">3-15 minutes to complete. All</div>
<div class="t" style="left:721.40px;top:126.00px;font-size:9.6px;line-height:9.6px;color:#4f5763;font-weight:400;-webkit-text-stroke:0">changes can be reverted.</div>
<div class="a" style="left:687.5px;top:612.5px;width:200.7px;height:109px;background:#f8f9fb;border:1.5px solid #d2d4d6;box-shadow:0 3px 8px rgba(0,0,0,0.08)"></div>
<div class="a" style="left:695.2px;top:625.1px;width:34.8px;height:14.7px;background:#86b49a;border-radius:3px"></div>
<div class="t" style="left:701.04px;top:628.00px;font-size:9.6px;line-height:9.6px;color:#fff;font-weight:700;transform:scaleX(0.9131);">Basic</div>
<div class="t" style="left:733.00px;top:628.00px;font-size:9.6px;line-height:9.6px;color:#bbbbbb;font-weight:400;transform:scaleX(1.4286);">//</div>
<div class="t" style="left:751.27px;top:623.00px;font-size:9.2px;line-height:9.2px;color:#a3a3a3;font-weight:400;transform:scaleX(1.1030);">Max</div>
<div class="t" style="left:756.80px;top:635.00px;font-size:9.2px;line-height:9.2px;color:#a3a3a3;font-weight:400;transform:scaleX(1.1125);">AI</div>
<div class="t" style="left:792.50px;top:623.00px;font-size:9.2px;line-height:9.2px;color:#a3a3a3;font-weight:400;transform:scaleX(1.0230);">Ask</div>
<div class="t" style="left:786.95px;top:635.00px;font-size:9.2px;line-height:9.2px;color:#a3a3a3;font-weight:400;transform:scaleX(1.1364);">Mode</div>
<div class="t" style="left:828.20px;top:628.00px;font-size:9.6px;line-height:9.6px;color:#bbbbbb;font-weight:400;transform:scaleX(1.5048);">//</div>
<div class="a" style="left:842px;top:625.1px;width:38.5px;height:14.7px;background:#86b49a;border-radius:3px"></div>
<div class="t" style="left:846.35px;top:628.00px;font-size:9.6px;line-height:9.6px;color:#fff;font-weight:700;transform:scaleX(1.0069);">Action</div>
<div class="t" style="left:701.27px;top:654.00px;font-size:10.3px;line-height:10.3px;color:#b3b3b3;font-weight:400;transform:scaleX(0.9143);">Type your message here...</div>
<div class="a" style="left:698.5px;top:694.6px;width:78.4px;height:16.6px;background:#fcfcfd;border:1px solid #e6e6e6"></div>
<div class="t" style="left:704.51px;top:698.00px;font-size:9.4px;line-height:9.4px;color:#a9a9a9;font-weight:400;transform:scaleX(0.9839);">Open Excel File</div>
<div class="a" style="left:785.7px;top:695px;width:0.8px;height:14px;background:#e3e3e3"></div>
<svg class="a" style="left:799.8px;top:697.3px" width="11.5" height="11.5" viewBox="0 0 24 24" fill="none" stroke-linecap="round" stroke-linejoin="round" stroke="#b0b0b0" stroke-width="2.2"><path d="m21.44 11.05-9.19 9.19a6 6 0 0 1-8.49-8.49l8.57-8.57A4 4 0 1 1 18 8.84l-8.59 8.57a2 2 0 0 1-2.83-2.83l8.49-8.48"/></svg>
<div class="t" style="left:813.50px;top:698.00px;font-size:9.4px;line-height:9.4px;color:#b3b3b3;font-weight:400;transform:scaleX(1.0051);">Attach Files</div>
<div class="a" style="left:873.1px;top:697.1px;width:14.4px;height:11.7px;background:#c2d9cb;border-radius:2px 0 0 2px"></div>
<div class="a" style="left:885px;top:702.6px;width:2.2px;height:2px;background:#eef5f0;border-radius:1px"></div>
</body></html>
